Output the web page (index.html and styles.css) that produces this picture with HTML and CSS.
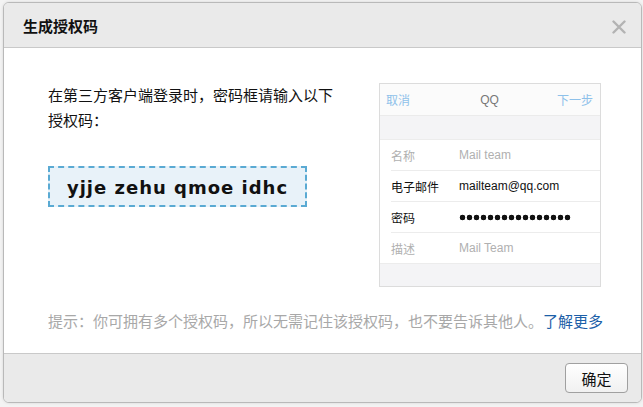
FILE: index.html
```html
<!DOCTYPE html>
<html lang="zh-CN">
<head>
<meta charset="utf-8">
<title>生成授权码</title>
<link rel="stylesheet" href="styles.css">
</head>
<body>
<div class="dialog">
  <div class="dialog-head">
    <span class="dialog-title">生成授权码</span>
    <svg class="close" width="14" height="14" viewBox="0 0 14 14"><path d="M1.5 1.5L12.5 12.5M12.5 1.5L1.5 12.5" stroke="#b3b3b3" stroke-width="2.4" stroke-linecap="round"/></svg>
  </div>
  <div class="dialog-body">
    <div class="top-row">
      <div class="left-col">
        <p class="intro">在第三方客户端登录时，密码框请输入以下<br>授权码：</p>
        <div class="code-box">yjje zehu qmoe idhc</div>
      </div>
      <div class="phone">
        <div class="phone-nav">
          <span class="nav-link">取消</span>
          <span class="nav-title">QQ</span>
          <span class="nav-link">下一步</span>
        </div>
        <div class="phone-gap"></div>
        <div class="phone-rows">
          <div class="phone-row light"><span class="row-label">名称</span><span class="row-value">Mail team</span></div>
          <div class="phone-row"><span class="row-label">电子邮件</span><span class="row-value">mailteam@qq.com</span></div>
          <div class="phone-row"><span class="row-label">密码</span><span class="dots"></span></div>
          <div class="phone-row light last"><span class="row-label">描述</span><span class="row-value">Mail Team</span></div>
        </div>
      </div>
    </div>
    <p class="tip">提示：你可拥有多个授权码，所以无需记住该授权码，也不要告诉其他人。<a class="more" href="#">了解更多</a></p>
  </div>
  <div class="dialog-foot">
    <button class="ok-btn">确定</button>
  </div>
</div>
</body>
</html>
```
FILE: styles.css
```css
html, body {
  margin: 0;
  padding: 0;
  background: #f3f3f3;
}
body {
  font-family: "Liberation Sans", "Noto Sans CJK SC", sans-serif;
  color: #222;
  width: 643px;
  height: 407px;
  overflow: hidden;
}
.dialog {
  margin: 2px 1px 0 3px;
  width: 637px;
  height: 399px;
  border: 1px solid #b9b9b9;
  border-radius: 6px;
  background: #fff;
  display: flex;
  flex-direction: column;
  overflow: hidden;
  box-shadow: 0 0 3px rgba(0,0,0,0.12);
}
.dialog-head {
  height: 44px;
  flex: none;
  background: #eaeaea;
  border-bottom: 1px solid #c9c9c9;
  display: flex;
  align-items: center;
  justify-content: space-between;
  padding: 0 15px 0 19px;
}
.dialog-title {
  font-family: "Noto Sans CJK SC", sans-serif;
  font-size: 15px;
  font-weight: 700;
  color: #111;
  margin-top: 1px;
}
.close {
  display: block;
  margin-top: 3px;
}
.dialog-body {
  flex: 1;
  padding: 35px 40px 0 44px;
}
.top-row {
  display: flex;
  justify-content: space-between;
  align-items: flex-start;
}
.left-col {
  width: 320px;
}
.intro {
  margin: -1px 0 0;
  font-family: "Noto Sans CJK SC", sans-serif;
  font-size: 15px;
  line-height: 25px;
  color: #111;
  white-space: nowrap;
}
.code-box {
  margin-top: 34px;
  width: 255px;
  height: 36px;
  border: 2px dashed #5aaad3;
  background: #e8f2f9;
  font-family: "DejaVu Sans", sans-serif;
  font-weight: 700;
  font-size: 18px;
  letter-spacing: 1px;
  color: #111;
  display: flex;
  align-items: center;
  justify-content: center;
  padding-top: 1px;
  box-sizing: content-box;
}
.phone {
  width: 220px;
  height: 202px;
  border: 1px solid #dcdcdc;
  background: #f4f4f6;
  font-family: "Liberation Sans", "Noto Sans CJK SC", sans-serif;
  font-size: 12px;
}
.phone-nav {
  height: 31px;
  background: #fbfbfb;
  border-bottom: 1px solid #ebebeb;
  display: flex;
  align-items: center;
  justify-content: space-between;
  padding: 0 7px 0 6px;
}
.nav-link {
  color: #8ec1ea;
  width: 40px;
}
.nav-link:last-child {
  text-align: right;
}
.nav-title {
  color: #777;
}
.phone-gap {
  height: 23px;
}
.phone-rows {
  background: #fff;
  border-top: 1px solid #ececec;
  border-bottom: 1px solid #ececec;
  padding-left: 11px;
}
.phone-row {
  height: 30px;
  display: flex;
  align-items: center;
  border-bottom: 1px solid #ececec;
  color: #111;
}
.phone-row.last {
  border-bottom: none;
}
.phone-row.light {
  color: #b0b0b0;
}
.row-label {
  width: 68px;
  flex: none;
  font-family: "Noto Sans CJK SC", sans-serif;
  font-size: 12px;
}
.row-value {
  font-size: 12px;
}
.dots {
  width: 112px;
  height: 7px;
  background-image: radial-gradient(circle at 3.5px 3.5px, #111 2.6px, transparent 3.1px);
  background-size: 7px 7px;
  background-repeat: repeat-x;
}
.tip {
  margin: 24px 0 0;
  font-family: "Noto Sans CJK SC", sans-serif;
  font-size: 15px;
  line-height: 20px;
  color: #a8a8a8;
  white-space: nowrap;
}
.more {
  color: #1d5fa8;
  text-decoration: none;
}
.dialog-foot {
  height: 49px;
  flex: none;
  background: #eaeaea;
  border-top: 1px solid #c9c9c9;
  display: flex;
  align-items: flex-start;
  justify-content: flex-end;
  padding: 9px 13px 0 0;
  box-sizing: border-box;
}
.ok-btn {
  width: 63px;
  height: 30px;
  border: 1px solid #a0a0a0;
  border-radius: 4px;
  background: linear-gradient(#ffffff, #f1f1f1);
  font-family: "Noto Sans CJK SC", sans-serif;
  font-size: 15px;
  color: #111;
  padding: 0;
}
```
